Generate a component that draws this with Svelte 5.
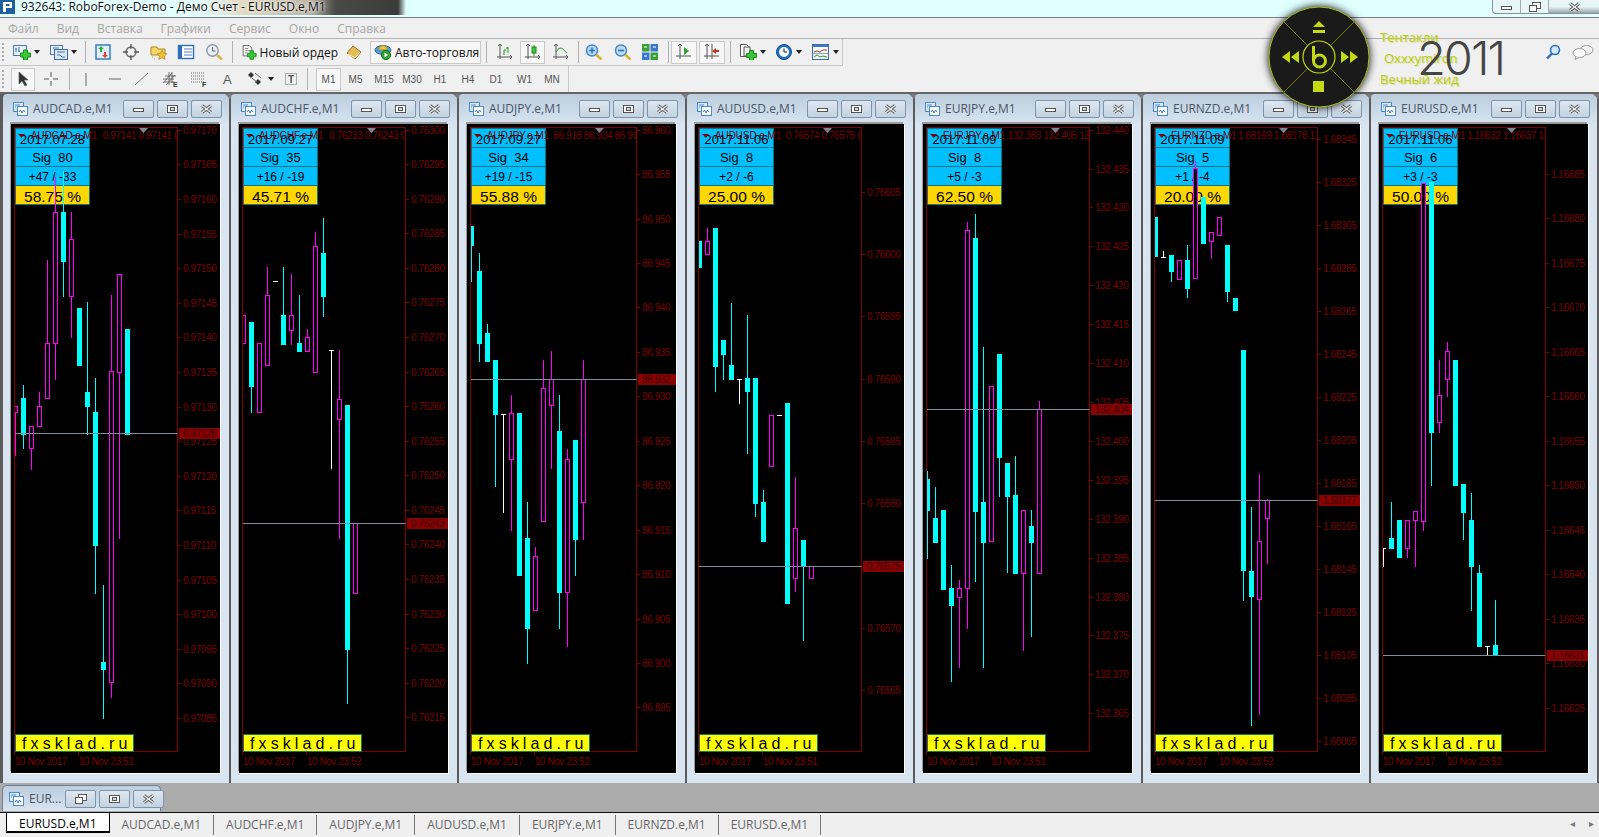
<script>
  const icons = {
    newchart: '<rect x=".5" y="1.5" width="13" height="10" fill="#e6eef8" stroke="#4a78b0"/><path d="M3 4v4M2 5h2M6 3v5M5 7h2" stroke="#4a78b0"/><path d="M10.5 6h4v3h3v4h-3v3h-4v-3h-3V9h3z" fill="#37c837" stroke="#1b8a1b"/>',
    profiles: '<rect x=".5" y="1.5" width="12" height="9" fill="#e6eef8" stroke="#4a78b0"/><rect x="4.5" y="5.5" width="13" height="10" fill="#dbe7f5" stroke="#3b6ea8"/><path d="M3 4h6M7 8h8M7 11h3l2 2h3" stroke="#4a78b0" fill="none"/>',
    market: '<rect x="2" y="1" width="14" height="14" fill="#e3eef9" stroke="#3d86cc" stroke-width="1.6"/><path d="M7 2l3 3H8v3H6V5H4z" fill="#2fb52f"/><path d="M11 14l-3-3h2V8h2v3h2z" fill="#e0452c"/>',
    cross: '<circle cx="9" cy="8" r="5" fill="none" stroke="#666" stroke-width="1.3"/><path d="M9 0v5M9 11v5M1 8h5M12 8h5" stroke="#555" stroke-width="1.3"/>',
    folder: '<path d="M1 3h6l1 2h7v6H1z" fill="#f6d568" stroke="#b08a2c"/><path d="M12 6l1.6 3.2 3.4.4-2.5 2.4.7 3.4-3.2-1.7-3.2 1.7.7-3.4L7 9.6l3.4-.4z" fill="#f0c02c" stroke="#b08a2c" stroke-width=".7"/><path d="M2 13h1M4 15h1" stroke="#999"/>',
    list: '<rect x="1.5" y="1.5" width="15" height="13" fill="#fff" stroke="#2f6fb5" stroke-width="1.4"/><rect x="2" y="2" width="3" height="12" fill="#2f6fb5"/><path d="M7 5h8M7 8h8M7 11h8" stroke="#4a7fbd"/>',
    clockmag: '<circle cx="7.5" cy="6.5" r="5.7" fill="#e9eef4" stroke="#8b98a8" stroke-width="1.4"/><path d="M7.5 3v4h3" stroke="#666" fill="none"/><path d="M12 11l5 4.5" stroke="#d5b53a" stroke-width="2.6"/>',
    neworder: '<path d="M2.5 .5h7l3 3v9h-10z" fill="#fff" stroke="#555"/><path d="M4.5 4h4M4.5 6.5h6M4.5 9h3" stroke="#777"/><path d="M10.5 6.5h4v3h3v4h-3v3h-4v-3h-3v-4h3z" fill="#37c837" stroke="#1b8a1b"/>',
    book: '<path d="M2 9l6-7 8 6-6 7z" fill="#e2bb55" stroke="#94702a"/><path d="M3 10l7 4 5-6" fill="none" stroke="#fff3c2"/>',
    auto: '<ellipse cx="9" cy="6" rx="8" ry="4.4" fill="#4f9fdf" stroke="#2a6aa8"/><path d="M5 3q4-3 8 0v3H5z" fill="#e8c44a" stroke="#a98a22"/><circle cx="12" cy="11" r="4.6" fill="#2fa52f" stroke="#166a16"/><path d="M10.5 8.7l3.6 2.3-3.6 2.3z" fill="#fff"/>',
    bars: '<path d="M4 0v15M1 13h15M2 2l2-2 2 2M14 11l2 2-2 2" stroke="#555" fill="none"/><path d="M8 11V6h2M12 9V3M10 4h2" stroke="#1e9a1e" fill="none"/>',
    candle: '<path d="M4 0v15M1 13h15M2 2l2-2 2 2M14 11l2 2-2 2" stroke="#555" fill="none"/><path d="M10 1v11" stroke="#1e8a1e"/><rect x="8" y="3" width="4" height="6" fill="#3cc43c" stroke="#1e8a1e"/>',
    line: '<path d="M4 0v15M1 13h15M2 2l2-2 2 2M14 11l2 2-2 2" stroke="#555" fill="none"/><path d="M4 8q4-7 8-2l3 3" stroke="#1e9a1e" fill="none"/>',
    zoomin: '<circle cx="7" cy="6.5" r="5.5" fill="#bcd9f3" stroke="#3f86cb" stroke-width="1.4"/><path d="M4 6.5h6M7 3.5v6" stroke="#2c74bc" stroke-width="1.6"/><path d="M11 10.5l5.5 5" stroke="#d5b53a" stroke-width="2.6"/>',
    zoomout: '<circle cx="7" cy="6.5" r="5.5" fill="#bcd9f3" stroke="#3f86cb" stroke-width="1.4"/><path d="M4 6.5h6" stroke="#2c74bc" stroke-width="1.6"/><path d="M11 10.5l5.5 5" stroke="#d5b53a" stroke-width="2.6"/>',
    tile: '<rect x="1" y="0" width="7.5" height="7.5" fill="#3aa03a"/><rect x="9.5" y="0" width="7.5" height="7.5" fill="#3a78d0"/><rect x="1" y="8.5" width="7.5" height="7.5" fill="#3a78d0"/><rect x="9.5" y="8.5" width="7.5" height="7.5" fill="#3aa03a"/><path d="M3 3h3M3 12h3M12 3h3M12 12h3" stroke="#fff"/>',
    scroll: '<path d="M5 0v15M1 12h15M3 2l2-2 2 2" stroke="#555" fill="none"/><path d="M9 3l5 4-5 4z" fill="#2fa52f"/>',
    shift: '<path d="M4 0v15M9 0v15M1 12h15M2 2l2-2 2 2" stroke="#555" fill="none"/><path d="M16 6h-3V4l-4 3 4 3V8h3z" fill="#c8321e"/>',
    template: '<path d="M1.5 .5h6l3 3v9h-9z" fill="#fff" stroke="#555"/><path d="M5 3h6v9H5z" fill="#f2f2f2" stroke="#555"/><path d="M10.5 6.5h4v3h3v4h-3v3h-4v-3h-3v-4h3z" fill="#37c837" stroke="#1b8a1b"/>',
    clock: '<circle cx="9" cy="8" r="7.5" fill="#1c6fc4" stroke="#124e8c"/><circle cx="9" cy="8" r="5" fill="#f4f7fa"/><path d="M9 4.5V8h3" stroke="#222" fill="none"/>',
    indicator: '<rect x=".5" y=".5" width="16" height="15" fill="#f4f7fb" stroke="#3b6ea8"/><rect x="1" y="1" width="15" height="2" fill="#3b7ac4"/><path d="M2 8l3-1 3 1 3-2 4 0" stroke="#c8321e" fill="none"/><path d="M1 9.5h15" stroke="#8aa"/><path d="M2 13l3-2 3 2 3-1 4 1" stroke="#2a9a2a" fill="none"/>',
    cursor: '<path d="M5 1v12l3-3 3 5 2-1-3-5h4z" fill="#333" stroke="#555" stroke-width=".6"/>',
    plus: '<path d="M9 1v5M9 10v5M2 8h5M11 8h5" stroke="#555"/>',
    vline: '<path d="M9 2v13" stroke="#666"/>',
    hline: '<path d="M3 8h12" stroke="#666"/>',
    trend: '<path d="M2 14L15 2" stroke="#777"/>',
    chan: '<path d="M1 12L10 2M4 14l9-10M1 8h11M3 5h11M2 11h10M7 1v13M10 1v11" stroke="#555" stroke-width=".8" fill="none"/><text x="11" y="16" font-size="7" font-family="Liberation Sans" fill="#333" font-weight="700">E</text>',
    fibo: '<path d="M1 2h14M1 5h14M1 8h14M1 11h14" stroke="#666" stroke-dasharray="1 1"/><text x="12" y="16" font-size="7" font-family="Liberation Sans" fill="#333" font-weight="700">F</text>',
    atext: '<text x="5" y="13" font-size="13" font-family="Liberation Sans" fill="#555">A</text>',
    arrows: '<path d="M4 1l3 3-3 3-3-3z" fill="#333"/><path d="M11 8l3 3-3 3-3-3z" fill="#333"/><path d="M5 7l5 4M8 2l6 5" stroke="#666"/>',
    tbox: '<rect x="3.5" y="2.5" width="11" height="11" fill="none" stroke="#666" stroke-dasharray="1 1"/><text x="6" y="12" font-size="10" font-family="Liberation Sans" font-weight="700" fill="#555">T</text>'
  }

  const row1 = [
    { w: 8, sep: 'grip' },
    { i: 'newchart', w: 34, pad: 3, drop: 1 },
    { i: 'profiles', w: 36, pad: 6, drop: 1 },
    { w: 10, sep: 'line' },
    { i: 'market', w: 26 },
    { i: 'cross', w: 29 },
    { i: 'folder', w: 27 },
    { i: 'list', w: 28 },
    { i: 'clockmag', w: 28 },
    { w: 8, sep: 'line' },
    { i: 'neworder', w: 102, pad: 5, label: 'Новый ордер' },
    { i: 'book', w: 32 },
    { i: 'auto', w: 111, pad: 3, label: 'Авто-торговля', box: 1 },
    { w: 9, sep: 'line' },
    { i: 'bars', w: 30 },
    { i: 'candle', w: 25, box: 1 },
    { i: 'line', w: 32 },
    { w: 2, sep: 'line' },
    { i: 'zoomin', w: 30 },
    { i: 'zoomout', w: 27 },
    { i: 'tile', w: 28 },
    { w: 7, sep: 'line' },
    { i: 'scroll', w: 26, box: 1 },
    { i: 'shift', w: 26, box: 1, gap: 2 },
    { w: 10, sep: 'line' },
    { i: 'template', w: 32, pad: 4, drop: 1 },
    { i: 'clock', w: 37, pad: 8, drop: 1 },
    { i: 'indicator', w: 41, pad: 8, drop: 1 }
  ]

  const row2 = [
    { w: 6, sep: 'grip' },
    { i: 'cursor', w: 24, box: 1, gap: 3 },
    { i: 'plus', w: 32 },
    { w: 3, sep: 'line' },
    { i: 'vline', w: 32 },
    { i: 'hline', w: 26 },
    { i: 'trend', w: 28 },
    { i: 'chan', w: 29 },
    { i: 'fibo', w: 28 },
    { i: 'atext', w: 27 },
    { i: 'arrows', w: 37, pad: 7, drop: 1 },
    { i: 'tbox', w: 28 },
    { w: 4, sep: 'line' },
    { tf: 'M1', w: 25, box: 1, gap: 7 },
    { tf: 'M5', w: 29 },
    { tf: 'M15', w: 28 },
    { tf: 'M30', w: 28 },
    { tf: 'H1', w: 28 },
    { tf: 'H4', w: 28 },
    { tf: 'D1', w: 28 },
    { tf: 'W1', w: 29 },
    { tf: 'MN', w: 26 }
  ]

  const winBtn = {
    min: '<rect x="1.5" y="4.5" width="10" height="3" fill="#fff" stroke="#555"/>',
    max: '<rect x="1.5" y="1.5" width="10" height="7" fill="#fff" stroke="#555"/><rect x="4.5" y="3.5" width="4" height="3" fill="#cfdbe8" stroke="#555"/>',
    close: '<path d="M2 1.5l9 7M11 1.5l-9 7" stroke="#555" stroke-width="3"/><path d="M2 1.5l9 7M11 1.5l-9 7" stroke="#f4f6f8" stroke-width="1.2"/>',
    restore: '<rect x="4.5" y=".5" width="8" height="6" fill="#fff" stroke="#555"/><rect x="1.5" y="3.5" width="7" height="6" fill="#fff" stroke="#555"/>'
  }

  // k: zoom factor of the values in candles, all candles are [type top bottom high low]
  const charts = [
    {
      name: 'AUDCAD.e,M1', head: '0.97141 0.97141 0', px: 91.7, date: '2017.07.28', sig: 80, score: '+47 / -33', pct: '58.75', end: '10 Nov 23:52',
      k: 1, cur: 334.3, price: '0.97126', first: 30.7, step: 34.6, from: 0.9717, dv: 0.00005, n: 18, dec: 5,
      candles: ['m 307 313 - 356', 'c 299 335 286 349', 'm 327 349 - 370', 'm 307 327 293 -', 'm 244 299 161 -', 'm 113 244 78 280', 'c 113 162 72 197', 'm 140 197 113 238', 'c 209 266 - -', 'c 293 307 203 335', 'c 313 446 279 494', 'c 563 570 486 619', 'm 272 583 196 598', 'm 175 273 - 439', 'c 230 335 - -']
    },
    {
      name: 'AUDCHF.e,M1', head: '0.76233 0.76243 0', px: 90, date: '2017.09.27', sig: 35, score: '+16 / -19', pct: '45.71', end: '10 Nov 23:52',
      k: 2.45, cur: 1040, price: '0.76243', first: 75, step: 84.7, from: 0.763, dv: 0.00005, n: 18, dec: 5,
      candles: ['m 530 598 - -', 'c 546 703 - 768', 'm 598 768 - -', 'm 481 651 412 -', 'w 447 447 - -', 'c 530 600 412 -', 'm 530 565 429 600', 'c 598 617 480 -', 'm 582 617 563 -', 'm 361 668 326 -', 'c 377 483 292 532', 'w 616 616 - 905', 'm 734 785 616 1075', 'c 750 1347 - 1481', 'm 1040 1210 - -']
    },
    {
      name: 'AUDJPY.e,M1', head: '86.918 86.934 86.91', px: 86.3, date: '2017.09.27', sig: 34, score: '+19 / -15', pct: '55.88', end: '10 Nov 23:52', axis: 169.5,
      k: 2.45, cur: 685, price: '86.932', first: 75, step: 108.9, from: 86.96, dv: 0.005, n: 14, dec: 3,
      candles: ['c 311 357 - 445', 'c 421 598 377 641', 'c 573 641 551 -', 'c 639 771 - 947', 'w 771 771 - 1011', 'm 770 881 725 1055', 'c 769 1166 - -', 'c 1076 1296 987 1381', 'm 1120 1251 1098 -', 'm 707 1033 639 -', 'm 685 749 617 903', 'c 813 1208 725 1296', 'm 881 1208 857 1339', 'c 835 1078 - 1166', 'm 685 988 639 1077']
    },
    {
      name: 'AUDUSD.e,M1', head: '0.76574 0.76575 0', px: 90.7, date: '2017.11.06', sig: 8, score: '+2 / -6', pct: '25.00', end: '10 Nov 23:51',
      k: 2.45, cur: 1143, price: '0.76575', first: 227, step: 152.7, from: 0.76605, dv: 0.00005, n: 9, dec: 5,
      candles: ['c 348 412 - -', 'm 348 379 316 -', 'c 316 654 - 715', 'c 590 625 - 686', 'c 652 686 500 -', 'w 685 685 - 746', 'c 684 715 529 867', 'c 684 990 - 1021', 'c 987 1083 958 -', 'm 775 898 - -', 'w 775 775 - -', 'c 745 1235 - -', 'm 1050 1173 926 1205', 'c 1080 1143 - 1325', 'm 1143 1173 - -']
    },
    {
      name: 'EURJPY.e,M1', head: '132.383 132.405 13', px: 84.7, date: '2017.11.09', sig: 8, score: '+5 / -3', pct: '62.50', end: '10 Nov 23:52',
      k: 2.45, cur: 760, price: '132.404', first: 75, step: 95.33, from: 132.44, dv: 0.005, n: 16, dec: 3,
      candles: ['c 931 1008 911 1125', 'c 1027 1085 951 -', 'c 1007 1200 - -', 'c 1198 1240 1142 1427', 'm 1198 1219 1178 1391', 'm 322 1199 301 1295', 'c 341 1009 282 1180', 'c 987 1085 608 1391', 'm 702 1084 - -', 'c 625 877 - 973', 'c 892 973 - 1160', 'c 970 1161 875 -', 'm 1008 1161 - 1351', 'c 1046 1085 1007 1315', 'm 760 1161 740 -']
    },
    {
      name: 'EURNZD.e,M1', head: '1.68169 1.68178 1.', px: 87, date: '2017.11.09', sig: 5, score: '+1 / -4', pct: '20.00', end: '10 Nov 23:52',
      k: 2.45, cur: 983, price: '1.68177', first: 99, step: 105.3, from: 1.68345, dv: 0.0002, n: 15, dec: 5,
      candles: ['c 289 385 - -', 'w 387 387 372 -', 'c 382 421 - 447', 'm 395 442 - -', 'c 394 463 358 485', 'm 168 438 152 -', 'c 240 353 - -', 'm 326 347 - 390', 'm 290 332 - -', 'c 358 470 - 495', 'c 488 517 - -', 'c 615 1154 - 1227', 'c 1156 1218 1000 1533', 'm 1084 1226 919 1506', 'm 983 1026 979 1137']
    },
    {
      name: 'EURUSD.e,M1', head: '1.16632 1.16637 1', px: 88, date: '2017.11.06', sig: 6, score: '+3 / -3', pct: '50.00', end: '10 Nov 23:52',
      k: 2.45, cur: 1361, price: '1.16631', first: 183, step: 109, from: 1.16685, dv: 0.00005, n: 13, dec: 5,
      candles: ['w 1099 1099 - 1143', 'c 1076 1100 987 -', 'c 1031 1122 - -', 'm 1032 1099 - 1121', 'm 1010 1032 - 1143', 'm 205 1033 - 1055', 'c 203 816 - 945', 'm 726 792 640 815', 'm 618 685 596 727', 'c 639 945 - -', 'c 943 1012 - 1077', 'c 1031 1143 965 1251', 'c 1161 1339 1142 -', 'w 1339 1339 - 1361', 'c 1338 1361 1227 -']
    }
  ]

  function localY(c, v) {
    return Math.round(100 + v / c.k - 125)
  }

  function parseCandles(c) {
    return c.candles.map((s, i) => {
      const [type, top, bottom, high, low] = s.split(' ')
      const t = localY(c, +top)
      const b = localY(c, +bottom)
      return {
        type,
        x: 4 + 8 * i,
        top: t,
        bottom: b,
        high: high === '-' ? t : localY(c, +high),
        low: low === '-' ? b : localY(c, +low)
      }
    })
  }

  function scale(c) {
    return Array.from({ length: c.n }, (_, i) => ({
      y: localY(c, c.first + c.step * i),
      text: (c.from - c.dv * i).toFixed(c.dec)
    }))
  }

  const tabs = ['EURUSD.e,M1', 'AUDCAD.e,M1', 'AUDCHF.e,M1', 'AUDJPY.e,M1', 'AUDUSD.e,M1', 'EURJPY.e,M1', 'EURNZD.e,M1', 'EURUSD.e,M1']
  const menu = ['Файл', 'Вид', 'Вставка', 'Графики', 'Сервис', 'Окно', 'Справка']
</script>

{#snippet winIcon()}
  <svg class="winicon" viewBox="0 0 15 14" width="15" height="14">
    <rect x=".5" y=".5" width="10" height="9" fill="#dceaf8" stroke="#4a8ad0" />
    <rect x="4.5" y="4.5" width="10" height="9" fill="#fff" stroke="#4a8ad0" />
    <path d="M6 10l1.5-2 1.5 3 1.5-3 1.5 2" fill="none" stroke="#3a70b0" />
    <path d="M2 3h5M2 5h1" stroke="#4a8ad0" />
  </svg>
{/snippet}

{#snippet toolRow(items)}
  {#each items as b}
    {#if b.sep}
      <span class={b.sep} style="width:{b.w}px"></span>
    {:else}
      <span
        class="tool"
        class:box={b.box}
        class:start={b.pad}
        style="width:{b.w}px;margin-left:{b.gap || 0}px;padding-left:{b.pad || 0}px"
      >
        {#if b.i}
          <svg viewBox="0 0 18 16" width="18" height="16">{@html icons[b.i]}</svg>
        {/if}
        {#if b.label}<span class="label">{b.label}</span>{/if}
        {#if b.tf}<span class="tf">{b.tf}</span>{/if}
        {#if b.drop}<span class="arrow"></span>{/if}
      </span>
    {/if}
  {/each}
{/snippet}

<div class="app">
  <header class="titlebar">
    <svg class="logo" viewBox="0 0 15 14" width="15" height="14">
      <rect width="15" height="14" fill="#1f5f9f" />
      <path d="M3 2h9v6H6v4H3z" fill="#fff" />
      <rect x="6" y="4" width="3.5" height="2" fill="#1f5f9f" />
    </svg>
    <span class="wintitle">932643: RoboForex-Demo - Демо Счет - EURUSD.e,M1</span>
    <div class="syscontrols">
      <span class="sys"><svg viewBox="0 0 13 10" width="13" height="10">{@html winBtn.min}</svg></span>
      <span class="sys"><svg viewBox="0 0 13 10" width="13" height="10">{@html winBtn.restore}</svg></span>
      <span class="sys last"><svg viewBox="0 0 13 10" width="13" height="10">{@html winBtn.close}</svg></span>
    </div>
  </header>

  <nav class="menu">
    {#each menu as m}<span>{m}</span>{/each}
  </nav>

  <div class="toolbar first">{@render toolRow(row1)}</div>
  <div class="toolbar second">
    {@render toolRow(row2)}
    <span class="endsep"></span>
  </div>

  <main class="mdi">
    <div class="windows">
      {#each charts as c}
        <section class="win">
          <div class="wintop">
            {@render winIcon()}
            <span class="wname">{c.name}</span>
            <div class="btns">
              <span class="btn"><svg viewBox="0 0 13 10" width="13" height="10">{@html winBtn.min}</svg></span>
              <span class="btn"><svg viewBox="0 0 13 10" width="13" height="10">{@html winBtn.max}</svg></span>
              <span class="btn"><svg viewBox="0 0 13 10" width="13" height="10">{@html winBtn.close}</svg></span>
            </div>
          </div>
          <svg class="chart" viewBox="0 0 209 649" width="209" height="649">
            <defs>
              <clipPath id="plot-{c.name}"><rect x="4" y="4" width={(c.axis || 166.5) - 4} height="623" /></clipPath>
            </defs>

            <!-- axis box -->
            <rect class="axis" x="3.5" y="3.5" width={(c.axis || 166.5) - 3.5} height="624" />
            {#each scale(c) as s}
              <path class="axis" d="M{c.axis || 166.5} {s.y + 0.5}h3.5" />
              <text class="scale" x={(c.axis || 166.5) + 5.5} y={s.y + 4}>{s.text}</text>
            {/each}
            <path class="axis" d="M3.5 627v4M67.5 627v4" />
            <text class="scale" x="3.7" y="641">10 Nov 2017</text>
            <text class="scale" x="67.7" y="641">{c.end}</text>

            <!-- stats table -->
            <rect class="cell" x="4.5" y="4.5" width="74" height="19" />
            <rect class="cell" x="4.5" y="23.5" width="74" height="19" />
            <rect class="cell" x="4.5" y="42.5" width="74" height="19" />
            <rect class="cell gold" x="4.5" y="61.5" width="74" height="19" />
            <text class="tt big" x="41.5" y="19.5">{c.date}</text>
            <text class="tt big" x="41.5" y="38">Sig  {c.sig}</text>
            <text class="tt mid" x="41.5" y="57">{c.score}</text>
            <text class="tt pct" x="41.5" y="77.5">{c.pct} %</text>

            <!-- header -->
            <g clip-path="url(#plot-{c.name})">
              <path class="redtri" d="M7 10h7l-3.5 3.5z" />
              <text class="scale hname" x="20" y="15">{c.name}</text>
              <text class="scale" x={c.px} y="15">{c.head}</text>
              <path class="graytri" d="M128 4h9l-4.500 5z" />
            </g>

            <!-- footer badge -->
            <rect class="cell yellow" x="4.5" y="610.5" width="118" height="17" />
            <text class="site" x="11" y="625">fxsklad.ru</text>

            <!-- candles -->
            <g clip-path="url(#plot-{c.name})" shape-rendering="crispEdges">
              {#each parseCandles(c) as k}
                {#if k.type === 'c'}
                  <rect class="wick-c" x={k.x} y={k.high} width="1" height={k.low - k.high + 1} />
                  <rect class="wick-c" x={k.x - 2} y={k.top} width="5" height={k.bottom - k.top + 1} />
                {:else if k.type === 'm'}
                  <rect class="wick-m" x={k.x} y={k.high} width="1" height={k.low - k.high + 1} />
                  <rect class="body-m" x={k.x - 1.5} y={k.top + 0.5} width="4" height={k.bottom - k.top} />
                {:else}
                  <rect class="wick-w" x={k.x} y={k.high} width="1" height={k.low - k.high + 1} />
                  <rect class="wick-w" x={k.x - 2} y={k.top} width="5" height="1" />
                {/if}
              {/each}
            </g>

            <!-- current price -->
            <rect class="curline" x="4" y={localY(c, c.cur)} width={(c.axis || 166.5) - 4} height="1" />
            <rect class="curbox" x={(c.axis || 166.5) + 1.5} y={localY(c, c.cur) - 5} width={209 - (c.axis || 166.5) - 1.5} height="11" />
            <text class="scale curtext" x={(c.axis || 166.5) + 5.5} y={localY(c, c.cur) + 4}>{c.price}</text>
          </svg>
        </section>
      {/each}
    </div>

    <div class="minwin">
      {@render winIcon()}
      <span class="wname">EUR...</span>
      <div class="btns">
        <span class="btn"><svg viewBox="0 0 13 10" width="13" height="10">{@html winBtn.restore}</svg></span>
        <span class="btn"><svg viewBox="0 0 13 10" width="13" height="10">{@html winBtn.max}</svg></span>
        <span class="btn"><svg viewBox="0 0 13 10" width="13" height="10">{@html winBtn.close}</svg></span>
      </div>
    </div>
  </main>

  <footer class="tabs">
    {#each tabs as t, i}
      <span class="tab" class:active={i === 0}>{t}</span>
    {/each}
    <span class="pager"><i>◂</i><i>▸</i></span>
  </footer>

  <!-- media player widget over the toolbar -->
  <svg class="player" viewBox="0 0 120 120" width="120" height="120">
    <circle cx="60" cy="60" r="50" fill="#1a1a1a" stroke="#a9be10" stroke-width="1" />
    <path d="M25 25L49 49M95 25L71 49M25 95L49 71M95 95L71 71" stroke="#6f7d14" stroke-width="1" />
    <circle cx="60" cy="60" r="16" fill="#1a1a1a" stroke="#c3da12" stroke-width="1.2" />
    <path d="M54.500 49v15" stroke="#c3da12" stroke-width="3" />
    <circle cx="60.500" cy="64" r="6" fill="none" stroke="#c3da12" stroke-width="3" />
    <path d="M60 24l6 6H54zM54 33h12v3H54z" fill="#c3da12" />
    <path d="M54 84h11v11H54z" fill="#c3da12" />
    <path d="M31 54v12l-8-6zM40 54v12l-8-6z" fill="#c3da12" />
    <path d="M83 54v12l8-6zM92 54v12l8-6z" fill="#c3da12" transform="translate(-1 0)" />
  </svg>
  <div class="song">
    <span class="s1">Тентакли</span>
    <span class="s2">Oxxxymiron</span>
    <span class="s3">Вечный жид</span>
  </div>
  <span class="year">2011</span>

  <svg class="search" viewBox="0 0 16 16" width="16" height="16">
    <circle cx="10" cy="6" r="4.500" fill="#d6e8fa" stroke="#2a6fc0" stroke-width="1.600" />
    <path d="M7 9.500L2 14.500" stroke="#2a6fc0" stroke-width="2.400" />
  </svg>
  <svg class="chat" viewBox="0 0 22 16" width="22" height="16">
    <ellipse cx="14.500" cy="6" rx="6.500" ry="4.500" fill="#f4f4f4" stroke="#9a9a9a" />
    <ellipse cx="7.500" cy="9" rx="6.500" ry="4.500" fill="#fbfbfb" stroke="#9a9a9a" />
    <path d="M4 12.500L3 15.500 7 13.500" fill="#fbfbfb" stroke="#9a9a9a" />
  </svg>
</div>

<style>
  :global(body) {
    margin: 0;
    background: #f0f0f0;
  }

  .app {
    position: relative;
    width: 1599px;
    height: 837px;
    overflow: hidden;
    display: flex;
    flex-direction: column;
    font-family: "Open Sans", "Noto Sans", sans-serif;
    font-size: 12px;
    background: #f0f0f0;
  }

  .titlebar {
    height: 17px;
    flex: none;
    display: flex;
    align-items: flex-start;
    border-bottom: 1px solid #7c7c7c;
    background: linear-gradient(to right, transparent 195px, #e3dcc6 240px, #b9b3a2 310px, #4a4a48 335px, #3b3b3b 398px, transparent 406px) 0 0 / 100% 15px no-repeat, #e0ffff;
  }

  .logo {
    flex: none;
    margin-right: 6px;
  }

  .wintitle {
    color: #111;
    line-height: 14px;
    text-shadow: 0 0 3px #fff, 0 0 5px #fff;
  }

  .syscontrols {
    margin-left: auto;
    height: 13px;
    display: flex;
    border: 1px solid #8a8f98;
    border-top: 0;
    border-right: 0;
    border-radius: 0 0 0 4px;
    background: #e7f6f8;
  }

  .sys {
    width: 27px;
    display: flex;
    align-items: center;
    justify-content: center;
    border-right: 1px solid #a7adb5;
  }

  .sys.last {
    width: 50px;
    border-right: 0;
    background: linear-gradient(#e7f6f8 50%, #9aa3ad);
  }

  .menu {
    height: 21px;
    flex: none;
    display: flex;
    align-items: center;
    gap: 18px;
    padding-left: 8px;
    color: #a6a6a6;
    box-sizing: border-box;
    border-bottom: 1px solid #b4b4b4;
  }

  .toolbar {
    flex: none;
    display: flex;
    align-items: center;
    box-sizing: border-box;
    background: #f0f0f0;
  }

  .toolbar.first {
    width: 843px;
    height: 27px;
    border-right: 1px solid #c8c8c8;
    border-bottom: 1px solid #c8c8c8;
  }

  .toolbar.second {
    height: 26px;
  }

  .grip {
    height: 18px;
    flex: none;
    border-left: 2px dotted #aaa;
    box-sizing: border-box;
    margin-left: 2px;
  }

  .line {
    flex: none;
    height: 22px;
    position: relative;
  }

  .line::after {
    content: "";
    position: absolute;
    top: 0;
    bottom: 0;
    left: 50%;
    border-left: 1px solid #b2b2b2;
  }

  .endsep {
    width: 3px;
    height: 26px;
    border-right: 1px solid #c8c8c8;
  }

  .tool {
    flex: none;
    height: 23px;
    display: flex;
    align-items: center;
    justify-content: center;
    box-sizing: border-box;
  }

  .tool.start {
    justify-content: flex-start;
  }

  .tool.box {
    background: #f7f7f7;
    border: 1px solid #c9c9c9;
  }

  .label {
    margin-left: 3px;
    color: #111;
    white-space: nowrap;
  }

  .tf {
    font-family: "Liberation Sans", sans-serif;
    font-size: 10px;
    color: #555;
  }

  .arrow {
    width: 0;
    height: 0;
    margin-left: 3px;
    border: 3px solid transparent;
    border-top: 4px solid #222;
    border-bottom: 0;
  }

  .mdi {
    flex: none;
    height: 720px;
    box-sizing: border-box;
    border-top: 2px solid #666;
    background: #ababab;
  }

  .windows {
    height: 689px;
    display: flex;
    gap: 2px;
    padding-left: 3px;
    background: linear-gradient(#ababab, #ababab) 0 100% / 100% 0 no-repeat, #5c5c5c;
  }

  .win {
    position: relative;
    flex: none;
    width: 226px;
    box-sizing: border-box;
    padding: 0 8px 0 8px;
    border-radius: 4px 4px 0 0;
    background: linear-gradient(#bccddd 0, #d8e4f0 30px);
  }

  .win::before {
    content: "";
    position: absolute;
    top: 0;
    right: -6px;
    border: 5px solid transparent;
    border-top: 5px solid #7b7b7b;
    border-bottom: 0;
  }

  .wintop {
    height: 30px;
    display: flex;
    align-items: center;
    box-sizing: border-box;
    padding-bottom: 1px;
  }

  .winicon {
    flex: none;
    margin: 0 5px 0 2px;
  }

  .wname {
    color: #4a5566;
    white-space: nowrap;
  }

  .btns {
    margin-left: auto;
    display: flex;
    gap: 3px;
    margin-right: -1px;
  }

  .btn {
    width: 29px;
    height: 16px;
    display: flex;
    align-items: center;
    justify-content: center;
    border: 1px solid #7f93ab;
    border-radius: 2px;
    background: linear-gradient(#dde7f1, #c3d2e1);
  }

  .chart {
    display: block;
    background: #000;
    box-shadow: -1px -2px 0 #9a9a9a, 1px 1px 0 #fff;
  }

  .axis {
    fill: none;
    stroke: #800000;
    stroke-width: 1;
  }

  .scale {
    font-family: "Liberation Sans", sans-serif;
    font-size: 10px;
    letter-spacing: -0.4px;
    fill: #7c0000;
    white-space: pre;
  }

  .hname {
    letter-spacing: -0.1px;
  }

  .cell {
    fill: #00bfff;
    stroke: #0f7480;
    stroke-width: 1;
  }

  .gold {
    fill: #ffd700;
  }

  .yellow {
    fill: #ffff00;
  }

  .tt {
    font-family: "Liberation Sans", sans-serif;
    text-anchor: middle;
    fill: #000;
    white-space: pre;
  }

  .big {
    font-size: 13px;
  }

  .mid {
    font-size: 12px;
  }

  .pct {
    font-size: 15.5px;
  }

  .site {
    font-family: "Liberation Sans", sans-serif;
    font-size: 16px;
    letter-spacing: 4.1px;
    fill: #000;
  }

  .redtri {
    fill: #8b0000;
  }

  .graytri {
    fill: #7f8794;
  }

  .wick-c {
    fill: #00ffff;
  }

  .wick-m {
    fill: #ff00ff;
  }

  .wick-w {
    fill: #fff;
  }

  .body-m {
    fill: #000;
    stroke: #ff00ff;
    stroke-width: 1;
  }

  .curline {
    fill: #7f8c9a;
  }

  .curbox {
    fill: #8b0000;
  }

  .curtext {
    fill: #3a0000;
  }

  .minwin {
    width: 159px;
    height: 26px;
    margin: 2px 0 0 2px;
    display: flex;
    align-items: center;
    box-sizing: border-box;
    padding: 0 3px 0 4px;
    border: 1px solid #6f8096;
    border-bottom: 0;
    border-radius: 5px 5px 0 0;
    background: linear-gradient(#bccddd, #d8e4f0);
  }

  .minwin .wname {
    margin-right: 4px;
  }

  .tabs {
    flex: 1;
    display: flex;
    align-items: flex-start;
    padding-left: 6px;
    border-top: 1px solid #111;
    background: #efefef;
  }

  .tab {
    height: 20px;
    line-height: 19px;
    box-sizing: border-box;
    padding: 0 12px;
    color: #666;
    white-space: nowrap;
    border-right: 1px solid #777;
    margin-top: 2px;
  }

  .tab.active {
    height: 20px;
    margin-top: 0;
    padding: 1px 12px 0;
    color: #000;
    background: #fff;
    border: 1px solid #000;
    border-top: 0;
    border-bottom-width: 2px;
  }

  .pager {
    margin-left: auto;
    margin-top: 3px;
    display: flex;
    gap: 14px;
    padding-right: 5px;
    color: #777;
    font-size: 10px;
  }

  .pager i {
    font-style: normal;
  }

  .player {
    position: absolute;
    left: 1259px;
    top: -3px;
    filter: drop-shadow(0 0 4px #000);
  }

  .song {
    position: absolute;
    left: 1380px;
    top: 28px;
    display: flex;
    flex-direction: column;
    gap: 3px;
    font-size: 13px;
    line-height: 18px;
    color: #bacb20;
    text-shadow: 1px 1px 1px #d7dc90;
  }

  .song .s2 {
    margin-left: 4px;
  }

  .year {
    position: absolute;
    left: 1417px;
    top: 30px;
    font-family: "Inter", "Lato", sans-serif;
    font-weight: 300;
    font-size: 47px;
    line-height: 56px;
    letter-spacing: -2px;
    color: #454545;
  }

  .search {
    position: absolute;
    left: 1545px;
    top: 44px;
  }

  .chat {
    position: absolute;
    left: 1572px;
    top: 44px;
  }
</style>
